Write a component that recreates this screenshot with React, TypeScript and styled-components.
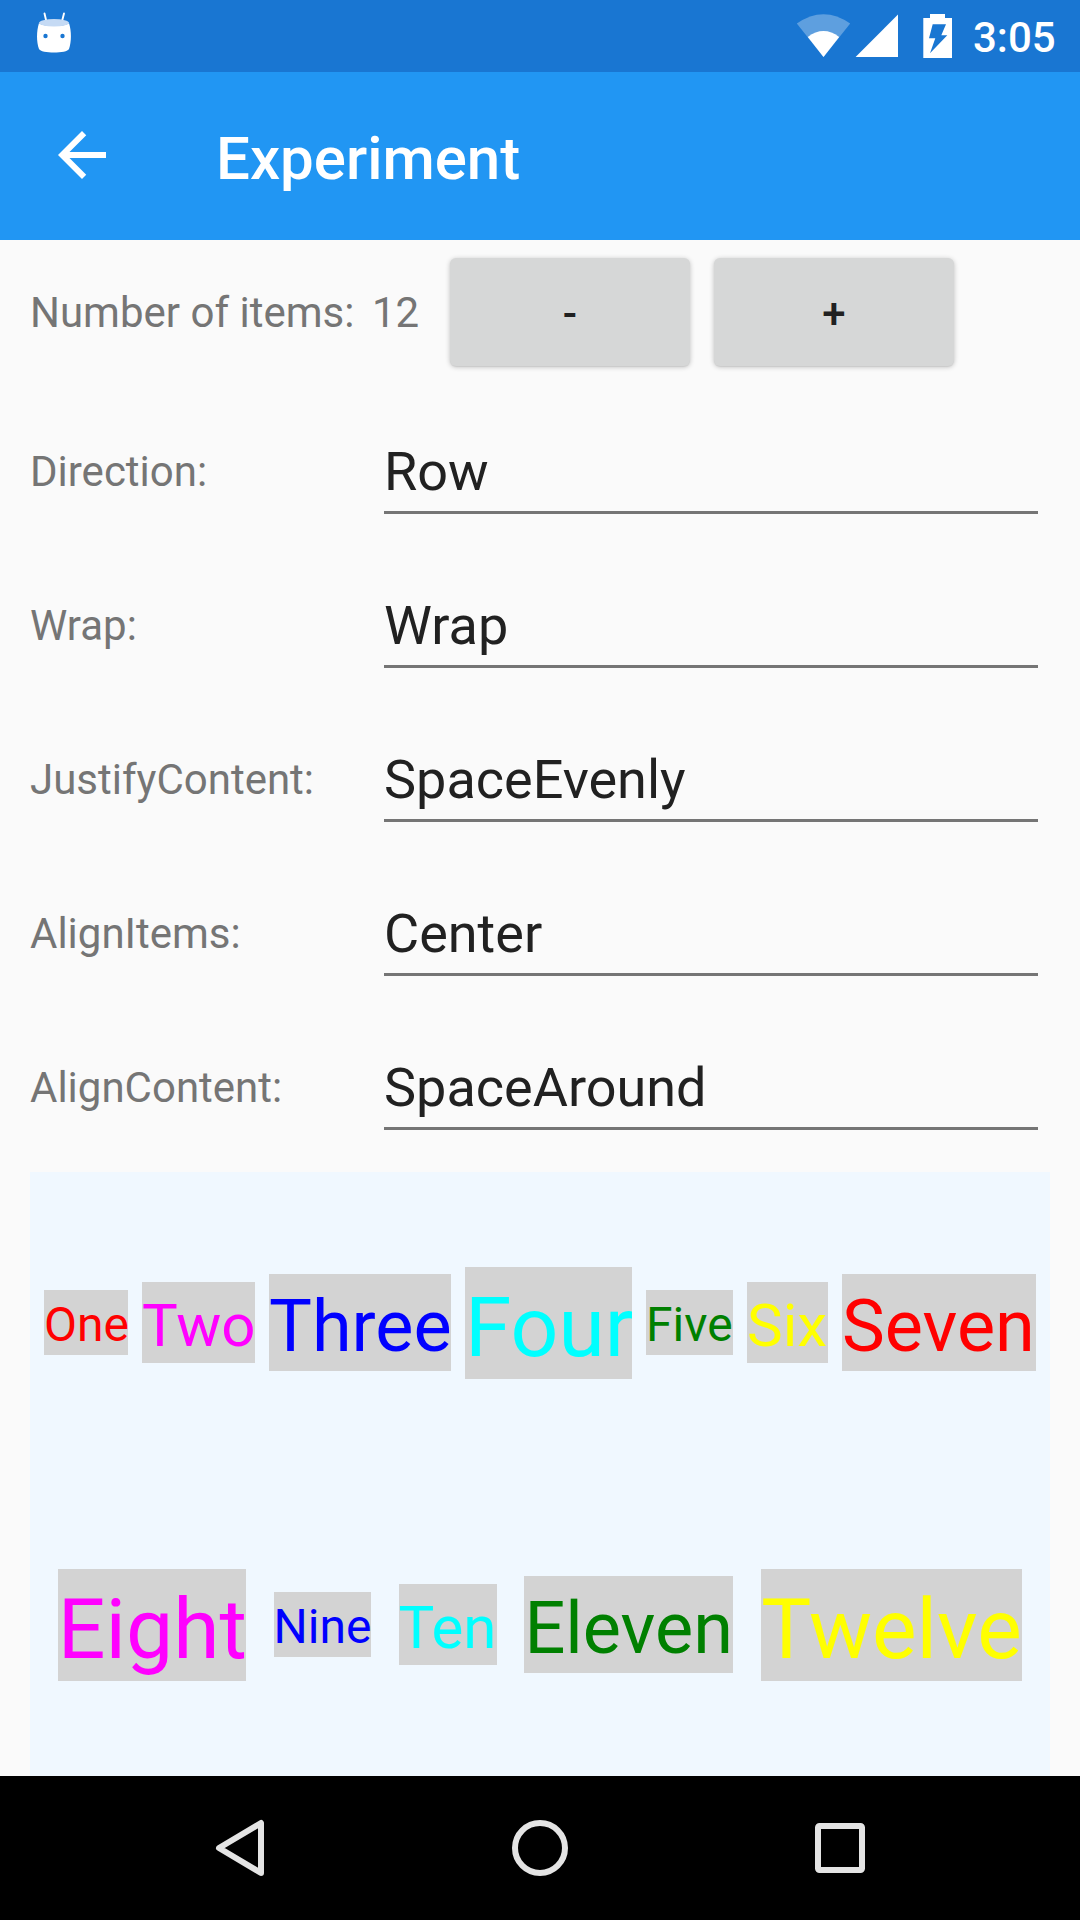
import React from "react";
import styled, { createGlobalStyle } from "styled-components";

const GlobalStyle = createGlobalStyle`
  html, body { margin: 0; padding: 0; background: #fafafa; }
  body { font-family: Roboto, "Noto Sans", sans-serif; overflow: hidden; }
  *, *::before, *::after { box-sizing: border-box; }
`;

const Screen = styled.div`
  display: flex;
  flex-direction: column;
  width: 1080px;
  height: 1920px;
  background: #fafafa;
  overflow: hidden;
`;

const StatusBar = styled.header`
  display: flex;
  align-items: center;
  justify-content: space-between;
  flex: none;
  height: 72px;
  padding: 0 23px 0 30px;
  background: #1976d2;
`;

const StatusIcons = styled.div`
  display: flex;
  align-items: center;
`;

const Clock = styled.span`
  width: 84px;
  margin-left: 11px;
  padding-top: 3px;
  font-size: 42px;
  font-weight: 500;
  line-height: 72px;
  color: #fff;
  white-space: nowrap;
`;

const AppBar = styled.div`
  display: flex;
  align-items: center;
  flex: none;
  height: 168px;
  padding-left: 46px;
  background: #2196f3;
`;

const BackButton = styled.button`
  display: flex;
  width: 72px;
  height: 72px;
  margin-bottom: 2px;
  padding: 0;
  border: 0;
  background: none;
`;

const Title = styled.h1`
  margin: 0 0 0 98px;
  padding-top: 6px;
  font-size: 60px;
  font-weight: 500;
  line-height: 80px;
  color: #fff;
`;

const Content = styled.main`
  display: flex;
  flex-direction: column;
  flex: 1;
  padding: 0 30px;
`;

const CounterRow = styled.div`
  display: flex;
  align-items: center;
  flex: none;
  height: 144px;
`;

const Label = styled.span`
  font-size: 42px;
  line-height: 83px;
  color: #757575;
  white-space: nowrap;
`;

const CounterLabel = styled(Label)`
  width: 342px;
`;

const CounterValue = styled(Label)`
  width: 78px;
`;

const StepButton = styled.button`
  width: 240px;
  height: 108px;
  margin-right: 24px;
  padding: 4px 0 0;
  border: 0;
  border-radius: 6px;
  background: #d6d7d7;
  box-shadow: 0 1px 5px rgba(0, 0, 0, 0.24), 0 1px 1px rgba(0, 0, 0, 0.06);
  font: 500 42px/104px Roboto, "Noto Sans", sans-serif;
  color: #212121;
`;

const FieldRow = styled.div`
  display: grid;
  grid-template-columns: 354px 654px;
  flex: none;
  height: 154px;
  padding: 46px 0 24px;
`;

const FieldValue = styled.div`
  height: 84px;
  padding-top: 2px;
  border-bottom: 3px solid #757575;
  font-size: 54px;
  line-height: 79px;
  color: #212121;
`;

const FlexPanel = styled.section`
  display: flex;
  flex-flow: row wrap;
  flex: 1;
  justify-content: space-evenly;
  align-items: center;
  align-content: space-around;
  margin-top: 18px;
  background: #f0f8ff;
`;

type Size = "small" | "medium" | "large" | "huge";

const metrics: Record<Size, { font: number; height: number; pad: number }> = {
  small: { font: 48, height: 65, pad: 4 },
  medium: { font: 60, height: 81, pad: 6 },
  large: { font: 72, height: 97, pad: 8 },
  huge: { font: 84, height: 112, pad: 10 },
};

const FlexItem = styled.span<{ $size: Size; $width: number; $color: string }>`
  width: ${(p) => p.$width}px;
  height: ${(p) => metrics[p.$size].height}px;
  margin-bottom: ${(p) => metrics[p.$size].height % 2}px;
  padding-top: ${(p) => metrics[p.$size].pad}px;
  background: #d3d3d3;
  color: ${(p) => p.$color};
  font-size: ${(p) => metrics[p.$size].font}px;
  line-height: ${(p) => metrics[p.$size].height - metrics[p.$size].pad}px;
  white-space: nowrap;
`;

const NavBar = styled.nav`
  display: flex;
  align-items: center;
  justify-content: center;
  gap: 228px;
  flex: none;
  height: 144px;
  background: #000;
`;

const NavButton = styled.button`
  display: flex;
  width: 72px;
  height: 72px;
  padding: 0;
  border: 0;
  background: none;
`;

const fields = [
  { label: "Direction:", value: "Row" },
  { label: "Wrap:", value: "Wrap" },
  { label: "JustifyContent:", value: "SpaceEvenly" },
  { label: "AlignItems:", value: "Center" },
  { label: "AlignContent:", value: "SpaceAround" },
];

const items: { text: string; size: Size; width: number; color: string }[] = [
  { text: "One", size: "small", width: 84, color: "#ff0000" },
  { text: "Two", size: "medium", width: 113, color: "#ff00ff" },
  { text: "Three", size: "large", width: 182, color: "#0000ff" },
  { text: "Four", size: "huge", width: 167, color: "#00ffff" },
  { text: "Five", size: "small", width: 87, color: "#008000" },
  { text: "Six", size: "medium", width: 81, color: "#ffff00" },
  { text: "Seven", size: "large", width: 194, color: "#ff0000" },
  { text: "Eight", size: "huge", width: 188, color: "#ff00ff" },
  { text: "Nine", size: "small", width: 97.2, color: "#0000ff" },
  { text: "Ten", size: "medium", width: 98, color: "#00ffff" },
  { text: "Eleven", size: "large", width: 209, color: "#008000" },
  { text: "Twelve", size: "huge", width: 261, color: "#ffff00" },
];

const MarshmallowIcon = () => (
  <svg width="48" height="72" viewBox="30 0 48 72" fill="#fff">
    <path d="M44.5 13.5 L46.5 22 M64 13.5 L61.8 22" stroke="#fff" strokeWidth="1.9" strokeLinecap="round" />
    <path d="M39 23 C36.4 31 36.4 42 39 49 C41 53.8 67 53.8 69 49 C71.6 42 71.6 31 69 23 C66 27 42 27 39 23Z" />
    <ellipse cx="54" cy="22.8" rx="15" ry="3.7" fill="#c5daf4" />
    <circle cx="45.5" cy="36" r="2.2" fill="#1976d2" />
    <circle cx="62.5" cy="36" r="2.2" fill="#1976d2" />
  </svg>
);

const SystemIcons = () => (
  <svg width="168" height="72" viewBox="794 0 168 72" fill="#fff">
    <path d="M796.8 23.5 Q823.5 4.8 850.2 23.5 L823.5 57Z" fillOpacity="0.3" />
    <path d="M807.8 37 Q823.5 25.2 839.2 37 L823.5 57Z" />
    <path d="M855.6 57 L898 57 L898 14.4Z" />
    <path
      fillRule="evenodd"
      d="M930 14 H945 V18 H952 V58 H923.3 V18 H930Z M932.7 24.3 L929 38.3 H935.3 L930 53.3 L947.3 35.3 H941.3 L946 24.3Z"
    />
  </svg>
);

export default function App() {
  return (
    <>
      <GlobalStyle />
      <Screen>
        <StatusBar>
          <MarshmallowIcon />
          <StatusIcons>
            <SystemIcons />
            <Clock>3:05</Clock>
          </StatusIcons>
        </StatusBar>
        <AppBar>
          <BackButton aria-label="Back">
            <svg width="72" height="72" viewBox="0 0 24 24" fill="#fff">
              <path d="M20 11H7.83l5.59-5.59L12 4l-8 8 8 8 1.41-1.41L7.83 13H20v-2z" />
            </svg>
          </BackButton>
          <Title>Experiment</Title>
        </AppBar>
        <Content>
          <CounterRow>
            <CounterLabel>Number of items:</CounterLabel>
            <CounterValue>12</CounterValue>
            <StepButton>-</StepButton>
            <StepButton>+</StepButton>
          </CounterRow>
          {fields.map((f) => (
            <FieldRow key={f.label}>
              <Label>{f.label}</Label>
              <FieldValue>{f.value}</FieldValue>
            </FieldRow>
          ))}
          <FlexPanel>
            {items.map((i) => (
              <FlexItem key={i.text} $size={i.size} $width={i.width} $color={i.color}>
                {i.text}
              </FlexItem>
            ))}
          </FlexPanel>
        </Content>
        <NavBar>
          <NavButton aria-label="Back">
            <svg width="72" height="72" fill="none" stroke="#e4e4e4" strokeWidth="6" strokeLinejoin="round">
              <path d="M15 36 L57 11 V61Z" />
            </svg>
          </NavButton>
          <NavButton aria-label="Home">
            <svg width="72" height="72" fill="none" stroke="#e4e4e4" strokeWidth="6">
              <circle cx="36" cy="36" r="25" />
            </svg>
          </NavButton>
          <NavButton aria-label="Overview">
            <svg width="72" height="72" fill="none" stroke="#e4e4e4" strokeWidth="6">
              <rect x="14" y="14" width="44" height="44" rx="1.5" />
            </svg>
          </NavButton>
        </NavBar>
      </Screen>
    </>
  );
}
